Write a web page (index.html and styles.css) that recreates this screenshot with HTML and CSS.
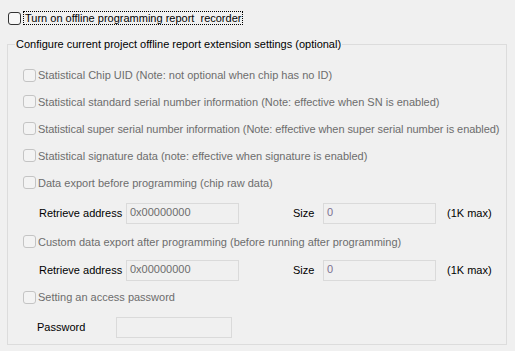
FILE: index.html
```html
<!DOCTYPE html>
<html lang="en">
<head>
    <meta charset="UTF-8">
    <title>Offline Report Settings</title>
    <link rel="stylesheet" href="styles.css">
</head>
<body>
    <div class="top-row">
        <span class="box on"></span>
        <span class="focus">Turn on offline programming report&nbsp; recorder</span>
    </div>

    <fieldset class="group">
        <legend>Configure current project offline report extension settings (optional)</legend>

        <div class="check r1"><span class="box"></span>Statistical Chip UID (Note: not optional when chip has no ID)</div>
        <div class="check"><span class="box"></span>Statistical standard serial number information (Note: effective when SN is enabled)</div>
        <div class="check tight"><span class="box"></span>Statistical super serial number information (Note: effective when super serial number is enabled)</div>
        <div class="check"><span class="box"></span>Statistical signature data (note: effective when signature is enabled)</div>
        <div class="check"><span class="box"></span>Data export before programming (chip raw data)</div>

        <div class="field f1">
            <span class="lbl">Retrieve address</span>
            <span class="input">0x00000000</span>
            <span></span>
            <span class="lbl">Size</span>
            <span class="input num">0</span>
            <span class="lbl max">(1K max)</span>
        </div>

        <div class="check"><span class="box"></span>Custom data export after programming (before running after programming)</div>

        <div class="field">
            <span class="lbl">Retrieve address</span>
            <span class="input">0x00000000</span>
            <span></span>
            <span class="lbl">Size</span>
            <span class="input num">0</span>
            <span class="lbl max">(1K max)</span>
        </div>

        <div class="check short"><span class="box"></span>Setting an access password</div>

        <div class="pwd">
            <span class="lbl">Password</span>
            <span class="input"></span>
        </div>
    </fieldset>
</body>
</html>
```

FILE: styles.css
```css
body {
    margin: 0;
    background: #f0f0f0;
    font-family: "Liberation Sans", Arial, sans-serif;
    font-size: 11px;
    color: #6d6d6d;
    white-space: nowrap;
}
.top-row {
    display: flex;
    align-items: center;
    height: 26px;
    padding: 5px 0 6px 8px;
    color: #000;
}
.top-row .focus {
    margin-left: 1px;
    padding: 0 1px;
    line-height: 12px;
    outline: 1px dotted #000;
}
.box {
    display: inline-block;
    flex: none;
    box-sizing: border-box;
    width: 13px;
    height: 13px;
    border: 1px solid #c4c4c4;
    border-radius: 3px;
    background: #f3f3f3;
    margin-right: 2px;
}
.box.on {
    border-color: #333;
    background: #f7f7f7;
}
.group {
    margin: 0 8px 0 7px;
    padding: 0 0 2px 15px;
    border: 1px solid #dcdcdc;
}
.group legend {
    margin-left: -8px;
    padding: 0 1px;
    color: #000;
    line-height: 14px;
}
.check {
    display: flex;
    align-items: center;
    height: 27px;
}
.check.r1 {
    margin-top: 11px;
    height: 26px;
}
.check.tight {
    letter-spacing: -0.07px;
}
.check.short {
    height: 24px;
}
.field {
    display: grid;
    grid-template-columns: 87px 113px 54px 30px 113px auto;
    align-items: center;
    height: 30px;
    padding-left: 16px;
}
.field.f1 {
    margin-top: 2px;
}
.pwd {
    display: grid;
    grid-template-columns: 79px 116px;
    align-items: center;
    height: 30px;
    margin-top: 3px;
    padding-left: 14px;
}
.lbl {
    color: #000;
}
.max {
    padding-left: 11px;
}
.input {
    box-sizing: border-box;
    height: 21px;
    padding: 2px 0 0 3px;
    border: 1px solid #dadada;
    background: #f0f0f0;
    color: #6d6d6d;
}
.input.num {
    color: #7d7090;
}
```
